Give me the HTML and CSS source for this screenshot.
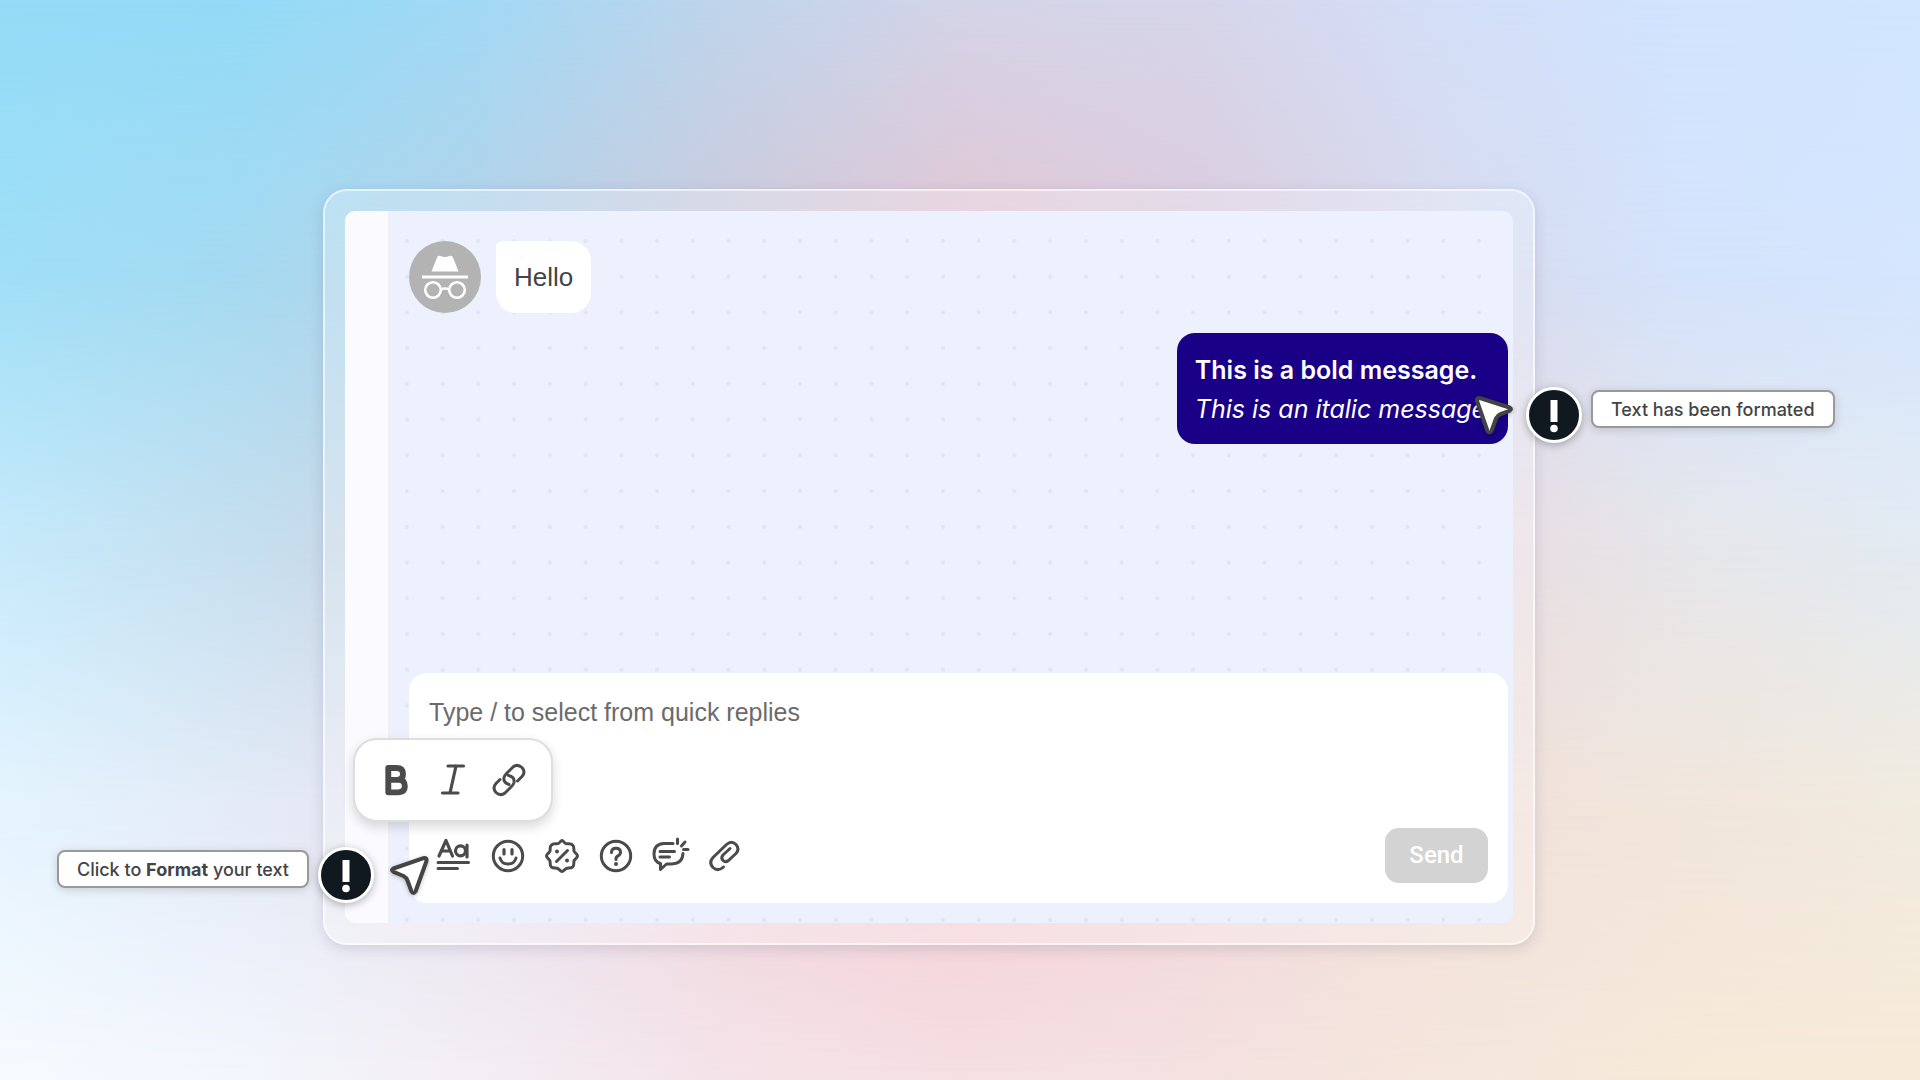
FILE: index.html
```
<!DOCTYPE html>
<html lang="en">
	<head>
		<meta charset="UTF-8">
		<meta name="viewport" content="width=device-width, initial-scale=1">
		<title>Format your text</title>
		<link rel="stylesheet" href="styles.css">
	</head>
	<body>
		<div class="sky">
			<div class="row row1"></div>
			<div class="row row2"></div>
			<div class="row row3"></div>
			<div class="row row4"></div>
			<div class="row row5"></div>
		</div>
		<main class="stage">
			<div class="frame">
				<div class="panel">
					<aside class="side"></aside>
					<section class="chat">
						<svg class="dots" width="100%" height="100%" aria-hidden="true">
							<defs>
								<pattern id="dot" width="20" height="20" patternUnits="userSpaceOnUse" patternTransform="translate(0 12) scale(1.787)">
									<circle cx="10" cy="10" r="1.1" fill="#e0e3f4"/>
								</pattern>
							</defs>
							<rect width="100%" height="100%" fill="url(#dot)"/>
						</svg>
						<div class="messages">
							<div class="msg">
								<svg class="avatar" viewBox="0 0 72 72" aria-hidden="true">
									<circle cx="36" cy="36" r="36" fill="#b3b3b3"/>
									<path d="M22.500 30.500L28 16.500Q29 14 31.500 15Q36 17 40.500 15Q43 14 44 16.500L49.500 30.500Z" fill="#fff"/>
									<path d="M13 36H59" stroke="#fff" stroke-width="3.200"/>
									<g fill="none" stroke="#fff" stroke-width="2.600">
										<circle cx="24" cy="49" r="7.800"/>
										<circle cx="48" cy="49" r="7.800"/>
										<path d="M31.500 48.500Q36 46.500 40.500 48.500"/>
									</g>
								</svg>
								<p class="bubble">Hello</p>
							</div>
							<div class="msg mine">
								<p class="bubble"><b>This is a bold message.</b><br><i>This is an italic message</i></p>
							</div>
						</div>
						<form class="compose">
							<textarea aria-label="Message" placeholder="Type / to select from quick replies"></textarea>
							<div class="bar">
								<div class="tools">
									<button type="button" aria-label="Format">
										<svg viewBox="0 0 36 36">
											<g stroke-width="3.200"><path d="M3 18L10 2.500L16.500 18M5.500 13H14.500"/><circle cx="24.500" cy="12.800" r="5"/><path d="M31 7V19"/></g>
											<path d="M2 24.500H32.500M2 30.500H21.500" stroke-width="3"/>
										</svg>
									</button>
									<button type="button" aria-label="Emoji">
										<svg viewBox="0 0 36 36">
											<circle cx="18" cy="18" r="14.700"/>
											<path d="M14 11.500V16M22 11.500V16" stroke-width="3.200"/>
											<path d="M10 20Q11.500 26 18 26T26 20"/>
										</svg>
									</button>
									<button type="button" aria-label="Discount">
										<svg viewBox="0 0 36 36">
											<path d="M18 2.500C20 3 20.500 6 23 5.800C25 5.600 27 5 28.800 7.200C30.500 9 29.500 11 30 13C30.600 15.300 33.500 15.800 33.500 18C33.500 20.200 30.600 20.700 30 23C29.500 25 30.500 27 28.800 28.800C27 30.500 25 29.800 23 30.200C20.500 30.700 20 33.500 18 33.500C16 33.500 15.500 30.700 13 30.200C11 29.800 9 30.500 7.200 28.800C5.500 27 6.500 25 6 23C5.400 20.700 2.500 20.200 2.500 18C2.500 15.800 5.400 15.300 6 13C6.500 11 5.500 9 7.200 7.200C9 5 11 5.600 13 5.800C15.500 6 16 3 18 2.500Z"/>
											<path d="M12.500 23.500L23.500 12.500"/>
											<circle cx="13" cy="13.500" r="2" class="solid"/><circle cx="23" cy="22.500" r="2" class="solid"/>
										</svg>
									</button>
									<button type="button" aria-label="Help">
										<svg viewBox="0 0 36 36">
											<circle cx="18" cy="18" r="14.700"/>
											<path d="M13.500 14.500Q13.500 10.300 18 10.300T22.500 14.300Q22.500 16.500 20 17.800T18 21.500"/>
											<circle cx="18" cy="26" r="2" class="solid"/>
										</svg>
									</button>
									<button type="button" aria-label="Quick replies">
										<svg viewBox="0 0 36 36">
											<path d="M21 5.500H12Q2 6 2 16Q2 24 8.500 25.500V31.500L14.500 26H20Q30.500 25.500 31 15.500"/>
											<path d="M8 13.500H22.500M8 19H17.500M25.500 1V5.500M29.500 8L33 4M31.500 11.500H36"/>
										</svg>
									</button>
									<button type="button" aria-label="Attach">
										<svg viewBox="0 0 36 36">
											<path d="M17.500 29Q12 34 7 29.500Q2.500 24.500 7 19.500L20.500 6.500Q25.500 2 30 6.500Q34 11 30 15.500L22.500 22.500Q19.500 25 17 22.500T17 17L24 10.500"/>
										</svg>
									</button>
								</div>
								<button type="button" class="send">Send</button>
							</div>
							<div class="popup">
								<button type="button" aria-label="Bold">
									<svg viewBox="0 0 36 36">
										<path d="M9 4.500H18Q25 4.500 25 11Q25 17.500 18 17.500H9ZM9 17.500H20Q27 17.500 27 24.500Q27 31 20 31H9Z" transform="translate(1 1.800) scale(.92)" stroke-width="6.400"/>
									</svg>
								</button>
								<button type="button" aria-label="Italic">
									<svg viewBox="0 0 36 36">
										<path d="M13 4H28.500M7.500 31H23M21 4L15 31" stroke-width="3.200"/>
									</svg>
								</button>
								<button type="button" aria-label="Link">
									<svg viewBox="0 0 36 36">
										<path d="M18 22.500Q12 20.500 13 15.500Q13.500 13.500 16 11L22 5Q26.500 1.500 31 5.500Q35 10 31 14.500L26.500 19M17.500 13.500Q24 15 23 20.500Q22.500 22.500 20.500 24.500L14 31Q9.500 34.500 5 30.500Q1 26 5 21.500L9 17.500"/>
									</svg>
								</button>
							</div>
						</form>
					</section>
				</div>

				<div class="callout left">
					<p class="label">Click to <b>Format</b> your text</p>
					<span class="badge"><svg viewBox="0 0 50 50"><path d="M21.500 10H28.500V32H21.500Z"/><circle cx="25" cy="38.500" r="3.800"/></svg></span>
					<svg class="cursor" viewBox="0 0 40 40"><path d="M3.500 13.500L33.500 3.200Q37 2.500 36.500 6L25.500 36.500Q23.500 39.500 21.500 36.500L17.500 25.500Q16.500 22.500 13.500 21L3.500 16.800Q.500 15 3.500 13.500Z"/></svg>
				</div>
				<div class="callout right">
					<svg class="cursor" viewBox="0 0 40 40"><path d="M6 3.200L35.500 12.500Q38.500 14 35.500 15.800L26.500 19.200Q23.500 20.500 22 23.500L17.500 36Q15.500 39 13.500 36L3 6Q2.500 2.500 6 3.200Z"/></svg>
					<span class="badge"><svg viewBox="0 0 50 50"><path d="M21.500 10H28.500V32H21.500Z"/><circle cx="25" cy="38.500" r="3.800"/></svg></span>
					<p class="label">Text has been formated</p>
				</div>
			</div>
		</main>
	</body>
</html>
```
FILE: styles.css
```
*{ margin: 0; padding: 0; box-sizing: border-box;}
body{ min-height: 100vh; position: relative; font-family: Inter, "Liberation Sans", sans-serif; color: #444;}
button{ border: 0; background: none; cursor: pointer;}
/*background: rows of colour, each one fading into the next*/
.sky{ position: absolute; inset: 0; overflow: hidden;}
.row{ position: absolute; inset: 0;}
.row1{ background: linear-gradient(90deg, #94dcf7, #94dbf7 12.5%, #a2d9f5 25%, #bfd5ec 37.5%, #d4d4e8 50%, #d7d6ea 62.5%, #d4dff8 75%, #d2e4ff 87.5%, #d2e6ff);}
.row2{ background: linear-gradient(90deg, #9fdff7, #a5daf1 12.5%, #b6d1e6 25%, #cfc9da 37.5%, #e3c5d1 50%, #dccbdd 62.5%, #d8daec 75%, #d4e3fc 87.5%, #d5e6fe); -webkit-mask-image: linear-gradient(transparent, #000 25%); mask-image: linear-gradient(transparent, #000 25%);}
.row3{ background: linear-gradient(90deg, #c6eafb, #c5dfef 12.5%, #ccd2e0 25%, #ddcbd6 37.5%, #ecccd3 50%, #e8d0da 62.5%, #eadbe1 75%, #e6e6ea 87.5%, #e3ebf3); -webkit-mask-image: linear-gradient(transparent 25%, #000 50%); mask-image: linear-gradient(transparent 25%, #000 50%);}
.row4{ background: linear-gradient(90deg, #e5f4fe, #e4ebf7 12.5%, #e8e2ee 25%, #efd5dd 37.5%, #f4cdd4 50%, #f1d7db 62.5%, #f0e0d9 75%, #f1e6dc 87.5%, #f1ebdf); -webkit-mask-image: linear-gradient(transparent 50%, #000 75%); mask-image: linear-gradient(transparent 50%, #000 75%);}
.row5{ background: linear-gradient(90deg, #f6faff, #f3f6fd 12.5%, #f3eef4 25%, #f4e3e9 37.5%, #f5dfe3 50%, #f4e1e0 62.5%, #f5e6dd 75%, #f6e9d8 87.5%, #f6ead8); -webkit-mask-image: linear-gradient(transparent 75%, #000); mask-image: linear-gradient(transparent 75%, #000);}
.stage{ position: relative; padding: 189px 385px 135px 323px;}
.frame{ position: relative; padding: 20px; border: 2px solid rgba(255,255,255,.7); border-radius: 24px; background: rgba(255,255,255,.25); background-clip: padding-box; box-shadow: 0 4px 14px rgba(80,80,110,.18);}
/*chat*/
.panel{ display: flex; border-radius: 10px; background: #edf0fd;}
.side{ width: 44px; background: #fafaff; border-right: 1px solid #f1f1f4; border-radius: 10px 0 0 10px;}
.chat{ flex: 1; position: relative; padding: 30px 5px 20px 20px;}
.dots{ position: absolute; left: 0; top: 0;}
.messages{ position: relative; min-height: 432px;}
.msg{ display: flex; gap: 15px; margin-bottom: 20px;}
.avatar{ width: 72px; height: 72px;}
.bubble{ padding: 16px 18px; border-radius: 6px 20px 20px 20px; background: #fff; font: 26px/40px "Liberation Sans", Arial, sans-serif;}
.mine{ justify-content: flex-end;}
.mine .bubble{ padding: 18px 22px 15px 18px; border-radius: 18px; background: #190087; color: #fff; font: 25px/39px Inter, sans-serif;}
.mine b{ font-weight: 600;}
.compose{ position: relative; padding: 20px; border-radius: 18px; background: #fff;}
textarea{ display: block; width: 100%; height: 115px; border: 0; outline: 0; resize: none; background: none; font: 25px/38px "Liberation Sans", Arial, sans-serif; color: #666;}
textarea::placeholder{ color: #6b6b6b;}
.bar{ display: flex; justify-content: space-between; align-items: center; margin-top: 20px;}
.tools{ display: flex; gap: 18px; padding-left: 7px;}
.tools button, .popup button{ width: 36px; height: 36px;}
.tools svg, .popup svg{ display: block; width: 36px; height: 36px; overflow: visible; fill: none; stroke: #4b4b4b; stroke-width: 3; stroke-linecap: round; stroke-linejoin: round;}
.tools .solid{ fill: #4b4b4b; stroke: none;}
.send{ width: 103px; height: 55px; border-radius: 14px; background: #d3d3d3; color: #fff; font: 500 24px/55px Roboto, sans-serif;}
.popup{ display: flex; justify-content: center; align-items: center; gap: 20px; position: absolute; left: -56px; top: 65px; width: 200px; height: 84px; border: 2px solid #dedede; border-radius: 24px; background: #fff; box-shadow: 0 5px 12px rgba(0,0,0,.15);}
/*callouts*/
.callout{ display: flex; position: absolute;}
.left{ right: 1103px; top: 656px;}
.right{ left: 1149px; top: 196px;}
.label{ align-self: flex-start; height: 38px; padding: 0 18px; border: 2px solid #999; border-radius: 8px; background: #fff; box-shadow: 0 2px 10px rgba(0,0,0,.15); font-size: 18px; font-weight: 500; line-height: 35px; white-space: nowrap;}
.badge{ width: 56px; height: 56px; border: 3px solid #fff; border-radius: 50%; background: #101820; box-shadow: 0 2px 8px rgba(0,0,0,.3);}
.badge svg{ display: block; width: 50px; height: 50px; fill: #fff;}
.cursor{ width: 40px; height: 40px; overflow: visible; fill: #fff; stroke: #444; stroke-width: 4; stroke-linejoin: round; filter: drop-shadow(0 1px 2px rgba(0,0,0,.25));}
.left .label{ margin: 3px 9px 0 0;}
.left .cursor{ margin: 8px 0 0 16px;}
.right .cursor{ margin: 8px 12px 0 0;}
.right .label{ margin: 3px 0 0 9px;}
```
